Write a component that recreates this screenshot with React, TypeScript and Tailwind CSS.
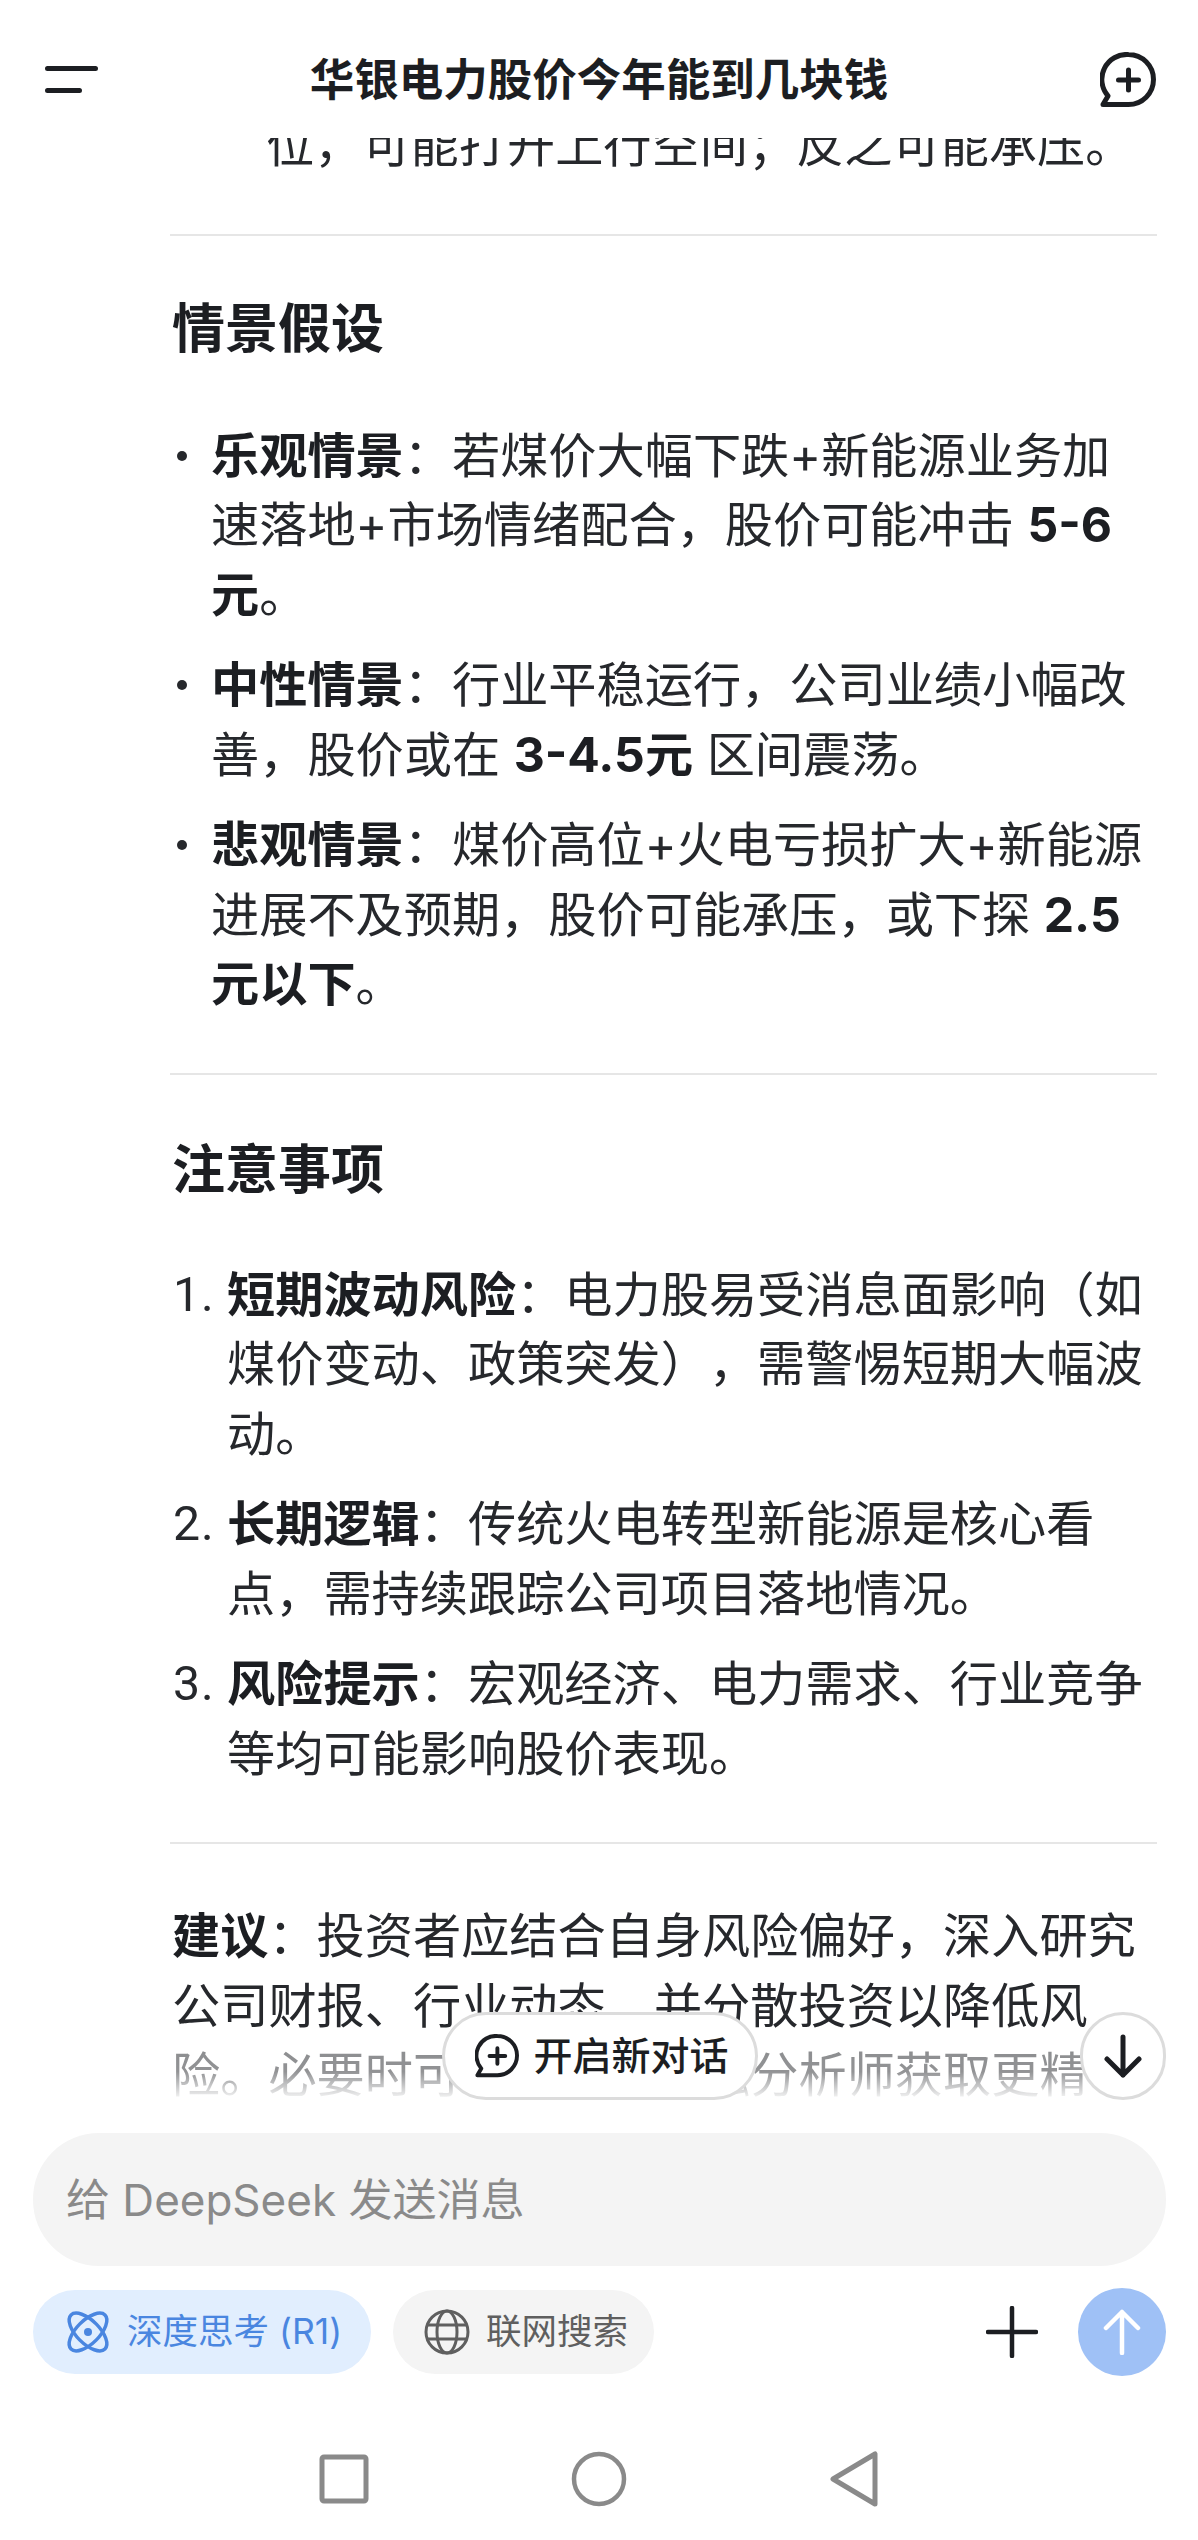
const font = { fontFamily: '"Inter", "Noto Sans CJK SC", sans-serif' };

function ChatPlus({ className }: { className: string }) {
  return (
    <svg viewBox="0 0 56 56" className={className} fill="none" stroke="currentColor" strokeLinecap="round" strokeLinejoin="round">
      <path d="M28.500 2.500a25 25 0 0 1 0 50H3l5-8.600A25 25 0 0 1 28.500 2.500Z" strokeWidth="5" />
      <path d="M28.500 18v20M18.500 28h20" strokeWidth="5" />
    </svg>
  );
}

function B({ children }: { children: React.ReactNode }) {
  return <strong className="font-bold text-[#1c1e22]">{children}</strong>;
}

function Rule() {
  return <div className="h-[2px] bg-[#e6e6e6] ml-[170px] mr-[41px]" />;
}

function Bullet({ children }: { children: React.ReactNode }) {
  return (
    <div className="relative pl-[211px] whitespace-nowrap">
      <span className="absolute left-[177px] top-[30px] w-[10px] h-[10px] rounded-full bg-[#26282c]" />
      {children}
    </div>
  );
}

function Numbered({ n, children }: { n: string; children: React.ReactNode }) {
  return (
    <div className="flex whitespace-nowrap">
      <span className="w-[227px] pl-[173px] font-['Roboto'] tracking-[1px]">{n}</span>
      <div>{children}</div>
    </div>
  );
}

export default function App() {
  return (
    <div className="w-[1198px] h-[2540px] bg-white flex flex-col overflow-hidden text-[#26282c] [text-spacing-trim:space-all]" style={font}>
      <header className="h-[138px] shrink-0 flex items-start justify-between pl-[45px] pr-[42px] pt-[52px] relative z-10 bg-white">
        <svg viewBox="0 0 53 28" className="w-[53px] h-[28px] mt-[13px] text-[#1c1e22]" fill="none" stroke="currentColor" strokeWidth="5" strokeLinecap="round">
          <path d="M2.500 3.500h48M2.500 25.500h32" />
        </svg>
        <h1 className="text-[44.500px] leading-[56px] font-semibold text-[#1c1e22]">华银电力股价今年能到几块钱</h1>
        <ChatPlus className="w-[56px] h-[56px] text-[#1c1e22]" />
      </header>

      <main className="relative h-[1963px] shrink-0">
        <div className="h-[1963px] overflow-hidden text-[48.200px] leading-[69.500px]">
          <p className="pl-[266px] -mt-[28px] whitespace-nowrap">位，可能打开上行空间；反之可能承压。</p>
          <div className="mt-[54px]"><Rule /></div>
          <h2 className="pl-[172px] mt-[61px] text-[53px] leading-[64px] font-bold text-[#1c1e22]">情景假设</h2>
          <div className="mt-[60px] flex flex-col gap-[21px]">
            <Bullet><B>乐观情景</B>：若煤价大幅下跌+新能源业务加<br />速落地+市场情绪配合，股价可能冲击 <B>5-6</B><br /><B>元</B>。</Bullet>
            <Bullet><B>中性情景</B>：行业平稳运行，公司业绩小幅改<br />善，股价或在 <B>3-4.5元</B> 区间震荡。</Bullet>
            <Bullet><B>悲观情景</B>：煤价高位+火电亏损扩大+新能源<br />进展不及预期，股价可能承压，或下探 <B>2.5</B><br /><B>元以下</B>。</Bullet>
          </div>
          <div className="mt-[54px]"><Rule /></div>
          <h2 className="pl-[172px] mt-[63px] text-[53px] leading-[64px] font-bold text-[#1c1e22]">注意事项</h2>
          <div className="mt-[58px] flex flex-col gap-[21px]">
            <Numbered n="1."><B>短期波动风险</B>：电力股易受消息面影响（如<br />煤价变动、政策突发），需警惕短期大幅波<br />动。</Numbered>
            <Numbered n="2."><B>长期逻辑</B>：传统火电转型新能源是核心看<br />点，需持续跟踪公司项目落地情况。</Numbered>
            <Numbered n="3."><B>风险提示</B>：宏观经济、电力需求、行业竞争<br />等均可能影响股价表现。</Numbered>
          </div>
          <div className="mt-[54px]"><Rule /></div>
          <p className="pl-[172px] mt-[57px] whitespace-nowrap">
            <B>建议</B>：投资者应结合自身风险偏好，深入研究<br />公司财报、行业动态，并分散投资以降低风<br />险。必要时可咨询专业金融分析师获取更精
          </p>
        </div>

        <div className="absolute left-0 right-0 top-[1890px] h-[73px] bg-gradient-to-b from-white/45 via-white/50 via-60% to-white" />
        <button className="absolute left-[442px] top-[1874px] w-[316px] h-[88px] rounded-full bg-white border-[3px] border-[#dcdcdc] flex items-center justify-center gap-[14px] pl-[4px] text-[39px] font-medium text-[#1c1e22]">
          <ChatPlus className="w-[44px] h-[44px]" />
          <span>开启新对话</span>
        </button>
        <button className="absolute left-[1080px] top-[1874px] w-[86px] h-[88px] rounded-full bg-white border-[3px] border-[#dcdcdc] flex items-center justify-center text-[#1c1e22]">
          <svg viewBox="0 0 40 44" className="w-[40px] h-[44px]" fill="none" stroke="currentColor" strokeWidth="5" strokeLinecap="round" strokeLinejoin="round">
            <path d="M20 3v38M4 25l16 16 16-16" />
          </svg>
        </button>
      </main>

      <section className="pl-[33px] pr-[32px] pt-[32px]">
        <div className="h-[133px] rounded-[66px] bg-[#f4f4f4] flex items-center pl-[33px] text-[44px] text-[#8a8a8a]">给 DeepSeek 发送消息</div>
        <div className="mt-[22px] flex items-center">
          <div className="h-[84px] w-[338px] rounded-full bg-[#e1eefe] flex items-center gap-[16px] pl-[32px] text-[35.500px] text-[#4a86e0]">
            <svg viewBox="0 0 46 46" className="w-[46px] h-[46px] shrink-0" fill="none" stroke="currentColor" strokeWidth="3.500">
              <ellipse cx="23" cy="23" rx="24" ry="11.500" transform="rotate(45 23 23)" />
              <ellipse cx="23" cy="23" rx="24" ry="11.500" transform="rotate(-45 23 23)" />
              <circle cx="23" cy="23" r="4" fill="currentColor" stroke="none" />
            </svg>
            <span className="whitespace-nowrap">深度思考 (R1)</span>
          </div>
          <div className="ml-[22px] h-[84px] w-[261px] rounded-full bg-[#f4f4f4] flex items-center gap-[16px] pl-[31px] text-[35.500px] text-[#5f5f5f]">
            <svg viewBox="0 0 46 46" className="w-[46px] h-[46px] shrink-0" fill="none" stroke="currentColor" strokeWidth="3">
              <circle cx="23" cy="23" r="21" />
              <ellipse cx="23" cy="23" rx="10" ry="21" />
              <path d="M3 16h40M3 30h40" />
            </svg>
            <span className="whitespace-nowrap">联网搜索</span>
          </div>
          <svg viewBox="0 0 52 52" className="ml-auto w-[52px] h-[52px] text-[#1c1e22]" fill="none" stroke="currentColor" strokeWidth="4.500" strokeLinecap="round">
            <path d="M26 2v48M2 26h48" />
          </svg>
          <div className="ml-[40px] w-[88px] h-[88px] rounded-full bg-[#9fc1f6] flex items-center justify-center text-white">
            <svg viewBox="0 0 40 46" className="w-[40px] h-[46px]" fill="none" stroke="currentColor" strokeWidth="4.500" strokeLinecap="round" strokeLinejoin="round">
              <path d="M20 44V3M4 19 20 3l16 16" />
            </svg>
          </div>
        </div>
      </section>

      <nav className="flex-1 flex items-center justify-center gap-[202px] pt-[42px] text-[#8a8a8a]">
        <svg viewBox="0 0 50 50" className="w-[50px] h-[50px]" fill="none" stroke="currentColor" strokeWidth="5" strokeLinejoin="round">
          <rect x="3" y="3" width="44" height="44" rx="2" />
        </svg>
        <svg viewBox="0 0 56 56" className="w-[56px] h-[56px]" fill="none" stroke="currentColor" strokeWidth="4.500">
          <circle cx="28" cy="28" r="25" />
        </svg>
        <svg viewBox="0 0 50 56" className="w-[50px] h-[56px]" fill="none" stroke="currentColor" strokeWidth="5" strokeLinejoin="round">
          <path d="M46 3v50L4 28Z" />
        </svg>
      </nav>
    </div>
  );
}
